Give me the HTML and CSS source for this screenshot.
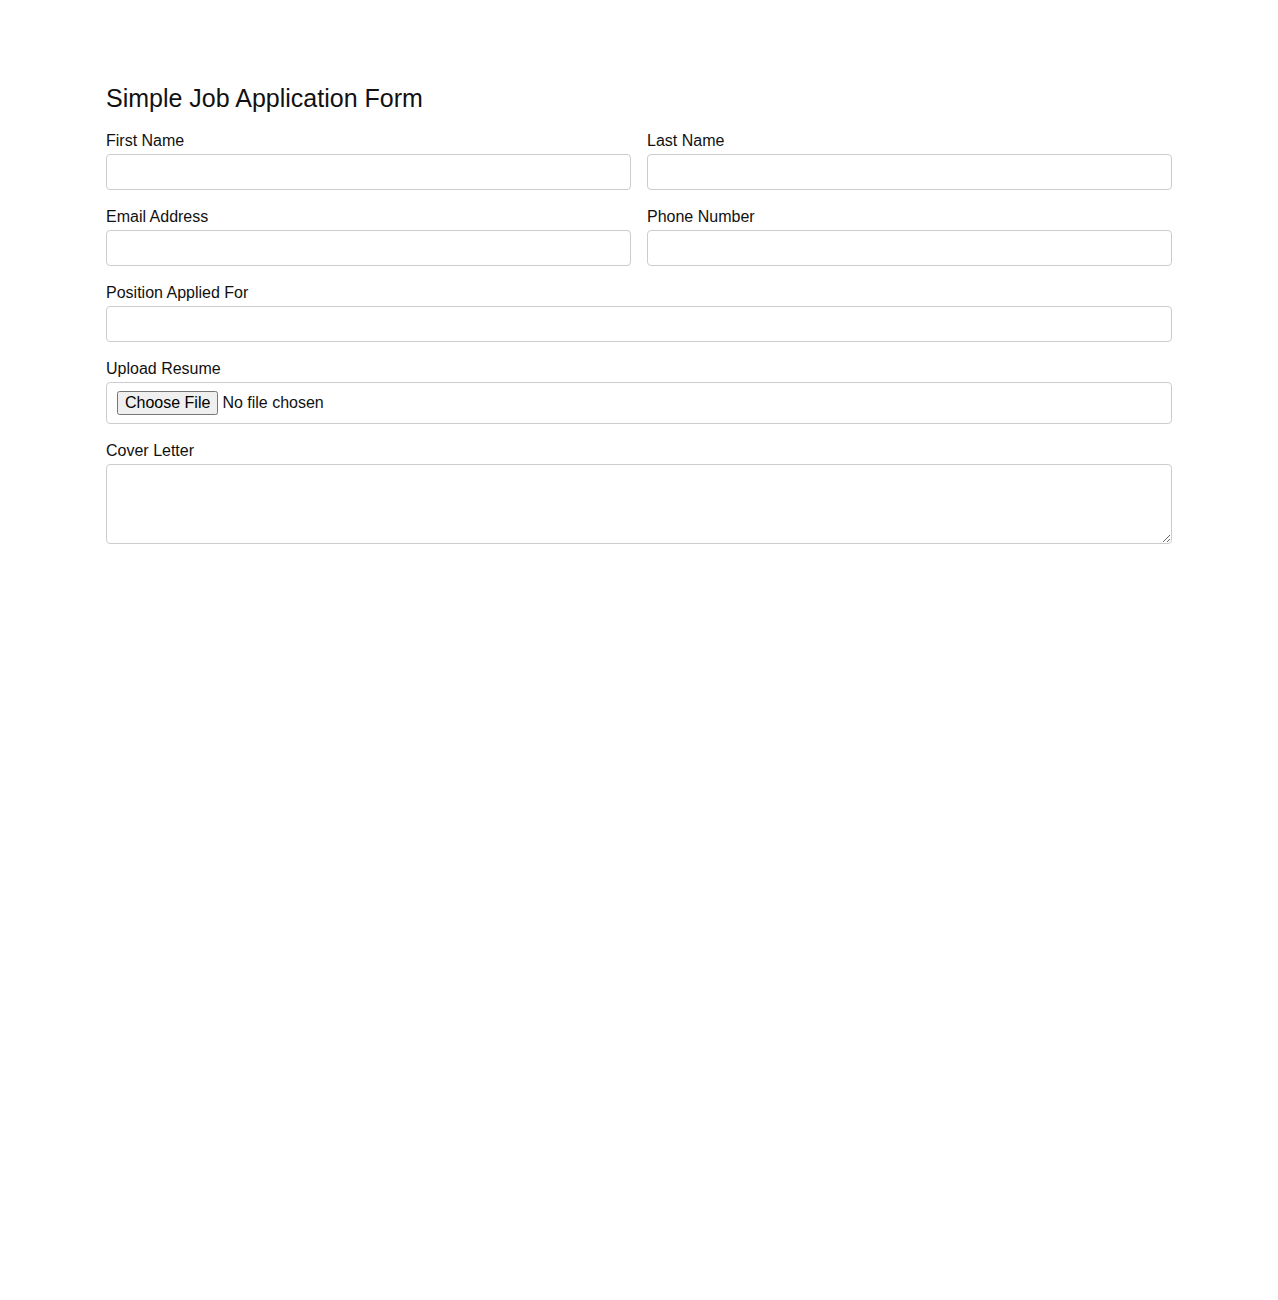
FILE: index.html
```html
<!DOCTYPE html>
<html>
<head>
<meta charset="utf-8">
<title>Simple Job Application Form</title>
<link rel="stylesheet" href="styles.css">
</head>
<body>
<div class="container">
  <h2 class="title">Simple Job Application Form</h2>
  <form class="form">
    <div class="row">
      <div class="group">
        <label class="label" for="fn">First Name</label>
        <input class="field" id="fn" type="text">
      </div>
      <div class="group">
        <label class="label" for="ln">Last Name</label>
        <input class="field" id="ln" type="text">
      </div>
    </div>
    <div class="row">
      <div class="group">
        <label class="label" for="em">Email Address</label>
        <input class="field" id="em" type="email">
      </div>
      <div class="group">
        <label class="label" for="ph">Phone Number</label>
        <input class="field" id="ph" type="tel">
      </div>
    </div>
    <div class="group">
      <label class="label" for="pos">Position Applied For</label>
      <input class="field" id="pos" type="text">
    </div>
    <div class="group">
      <label class="label" for="res">Upload Resume</label>
      <input class="field file" id="res" type="file">
    </div>
    <div class="group">
      <label class="label" for="cl">Cover Letter</label>
      <textarea class="field area" id="cl"></textarea>
    </div>
  </form>
</div>
</body>
</html>
```
FILE: styles.css
```css
html, body {
  margin: 0;
  padding: 0;
  background: #fff;
}
body {
  font-family: "Liberation Sans", Arial, sans-serif;
  color: #111;
}
.container {
  width: 1066px;
  margin: 0 auto;
  padding-top: 84px;
}
.title {
  font-size: 25px;
  font-weight: normal;
  margin: 0 0 20px 0;
  line-height: 28px;
}
.row {
  display: grid;
  grid-template-columns: 1fr 1fr;
  column-gap: 16px;
}
.group {
  margin-bottom: 18px;
}
.label {
  display: block;
  font-size: 16px;
  line-height: 18px;
  margin-bottom: 4px;
}
.field {
  display: block;
  box-sizing: border-box;
  width: 100%;
  height: 36px;
  padding: 8px;
  border: 1px solid #ccc;
  border-radius: 4px;
  font-family: "Liberation Sans", Arial, sans-serif;
  font-size: 16px;
  background: #fff;
  margin: 0;
}
.file {
  height: 42px;
  padding-left: 10px;
}
.area {
  height: 80px;
  resize: vertical;
}
```
